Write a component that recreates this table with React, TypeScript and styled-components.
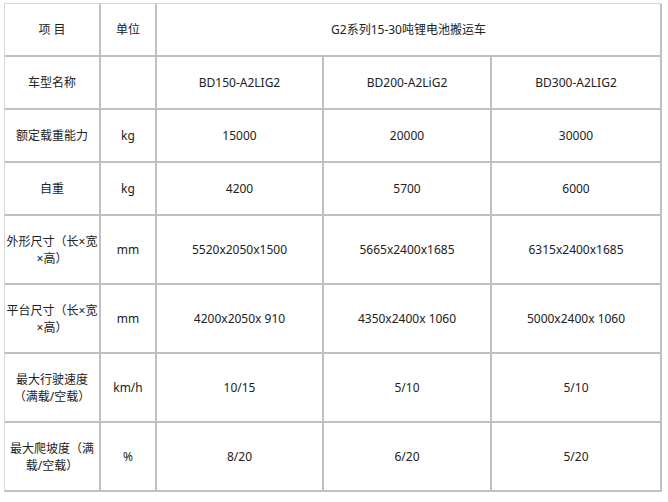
import React from "react";
import styled, { createGlobalStyle } from "styled-components";

const GlobalStyle = createGlobalStyle`
  html, body {
    margin: 0;
    padding: 0;
    background: #ffffff;
  }
  body {
    font-family: "Noto Sans", "Noto Sans CJK SC", sans-serif;
    color: #222222;
  }
`;

const Page = styled.div`
  padding: 3px 0 0 4px;
`;

const Table = styled.table`
  width: 658px;
  table-layout: fixed;
  border-collapse: separate;
  border-spacing: 0;
  border-top: 1px solid #d6d6d6;
  border-left: 1px solid #d6d6d6;
  font-size: 12px;
`;

const Cell = styled.td<{ $tall?: boolean }>`
  box-sizing: border-box;
  height: ${(p) => (p.$tall ? 69 : 53)}px;
  padding: 0 1px;
  border-right: 2px solid #c0c0c0;
  border-bottom: 2px solid #c0c0c0;
  text-align: center;
  vertical-align: middle;
  line-height: 17px;
  color: #222222;
`;

const Col = styled.col<{ $w: number }>`
  width: ${(p) => p.$w}px;
`;

type Row = {
  name: React.ReactNode;
  unit: string;
  values: string[];
  tall?: boolean;
};

const rows: Row[] = [
  { name: "车型名称", unit: "", values: ["BD150-A2LIG2", "BD200-A2LiG2", "BD300-A2LIG2"] },
  { name: "额定载重能力", unit: "kg", values: ["15000", "20000", "30000"] },
  { name: "自重", unit: "kg", values: ["4200", "5700", "6000"] },
  {
    name: (
      <>
        外形尺寸（长×宽
        <br />
        ×高）
      </>
    ),
    unit: "mm",
    values: ["5520x2050x1500", "5665x2400x1685", "6315x2400x1685"],
    tall: true,
  },
  {
    name: (
      <>
        平台尺寸（长×宽
        <br />
        ×高）
      </>
    ),
    unit: "mm",
    values: ["4200x2050x 910", "4350x2400x 1060", "5000x2400x 1060"],
    tall: true,
  },
  {
    name: (
      <>
        最大行驶速度
        <br />
        （满载/空载）
      </>
    ),
    unit: "km/h",
    values: ["10/15", "5/10", "5/10"],
    tall: true,
  },
  {
    name: (
      <>
        最大爬坡度（满
        <br />
        载/空载）
      </>
    ),
    unit: "%",
    values: ["8/20", "6/20", "5/20"],
    tall: true,
  },
];

export default function App() {
  return (
    <Page>
      <GlobalStyle />
      <Table>
        <colgroup>
          <Col $w={96} />
          <Col $w={56} />
          <Col $w={167} />
          <Col $w={168} />
          <Col $w={170} />
        </colgroup>
        <tbody>
          <tr>
            <Cell>项 目</Cell>
            <Cell>单位</Cell>
            <Cell colSpan={3}>G2系列15-30吨锂电池搬运车</Cell>
          </tr>
          {rows.map((r, i) => (
            <tr key={i}>
              <Cell $tall={r.tall}>{r.name}</Cell>
              <Cell $tall={r.tall}>{r.unit}</Cell>
              {r.values.map((v, j) => (
                <Cell key={j} $tall={r.tall}>
                  {v}
                </Cell>
              ))}
            </tr>
          ))}
        </tbody>
      </Table>
    </Page>
  );
}
